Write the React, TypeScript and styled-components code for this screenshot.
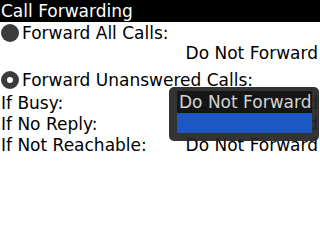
import React from "react";
import styled, { createGlobalStyle } from "styled-components";

const Global = createGlobalStyle`
  html, body { margin: 0; padding: 0; background: #fff; }
  body { width: 320px; height: 240px; overflow: hidden; font-family: "DejaVu Sans", sans-serif; }
`;

const Screen = styled.div`
  position: relative;
  width: 320px;
  height: 240px;
  background: #fff;
  color: #000;
  font-family: "DejaVu Sans", sans-serif;
  font-size: 17px;
`;

const TitleBar = styled.div`
  height: 22px;
  line-height: 22px;
  background: #000;
  color: #fff;
  padding-left: 1px;
  white-space: nowrap;
`;

const OptionRow = styled.div<{ $top: number }>`
  display: flex;
  align-items: center;
  gap: 3px;
  height: 20px;
  line-height: 20px;
  margin-top: ${(p) => p.$top}px;
  padding-left: 1px;
  white-space: nowrap;
`;

const Radio = styled.span<{ $ring?: boolean }>`
  box-sizing: border-box;
  width: 18px;
  height: 18px;
  border-radius: 50%;
  background: ${(p) => (p.$ring ? "#fff" : "#3c3c3c")};
  border: ${(p) => (p.$ring ? "6px solid #3c3c3c" : "none")};
  flex: none;
`;

const ValueLine = styled.div`
  height: 20px;
  line-height: 20px;
  text-align: right;
  padding-right: 2px;
  white-space: nowrap;
`;

const FieldList = styled.div`
  margin-top: 3px;
`;

const FieldRow = styled.div`
  display: flex;
  justify-content: space-between;
  height: 21px;
  line-height: 21px;
  padding: 0 2px 0 1px;
  white-space: nowrap;
`;

const Popup = styled.div`
  position: absolute;
  left: 169px;
  top: 87px;
  width: 150px;
  height: 54px;
  box-sizing: border-box;
  border-radius: 5px;
  background: rgba(38, 38, 38, 0.94);
  padding: 4px 7px 6px 8px;
  display: flex;
  flex-direction: column;
`;

const PopupItem = styled.div<{ $selected?: boolean }>`
  height: ${(p) => (p.$selected ? 20 : 22)}px;
  line-height: 22px;
  padding-left: 2px;
  color: #d4d4d4;
  background: ${(p) => (p.$selected ? "#1b58c4" : "rgba(10,10,10,0.7)")};
  white-space: nowrap;
`;

export default function App() {
  return (
    <Screen>
      <Global />
      <TitleBar>Call Forwarding</TitleBar>
      <OptionRow $top={1}>
        <Radio />
        <span>Forward All Calls:</span>
      </OptionRow>
      <ValueLine>Do Not Forward</ValueLine>
      <OptionRow $top={7}>
        <Radio $ring />
        <span>Forward Unanswered Calls:</span>
      </OptionRow>
      <FieldList>
        <FieldRow>
          <span>If Busy:</span>
          <span>Do Not Forward</span>
        </FieldRow>
        <FieldRow>
          <span>If No Reply:</span>
          <span>Do Not Forward</span>
        </FieldRow>
        <FieldRow>
          <span>If Not Reachable:</span>
          <span>Do Not Forward</span>
        </FieldRow>
      </FieldList>
      <Popup>
        <PopupItem>Do Not Forward</PopupItem>
        <PopupItem $selected />
      </Popup>
    </Screen>
  );
}
